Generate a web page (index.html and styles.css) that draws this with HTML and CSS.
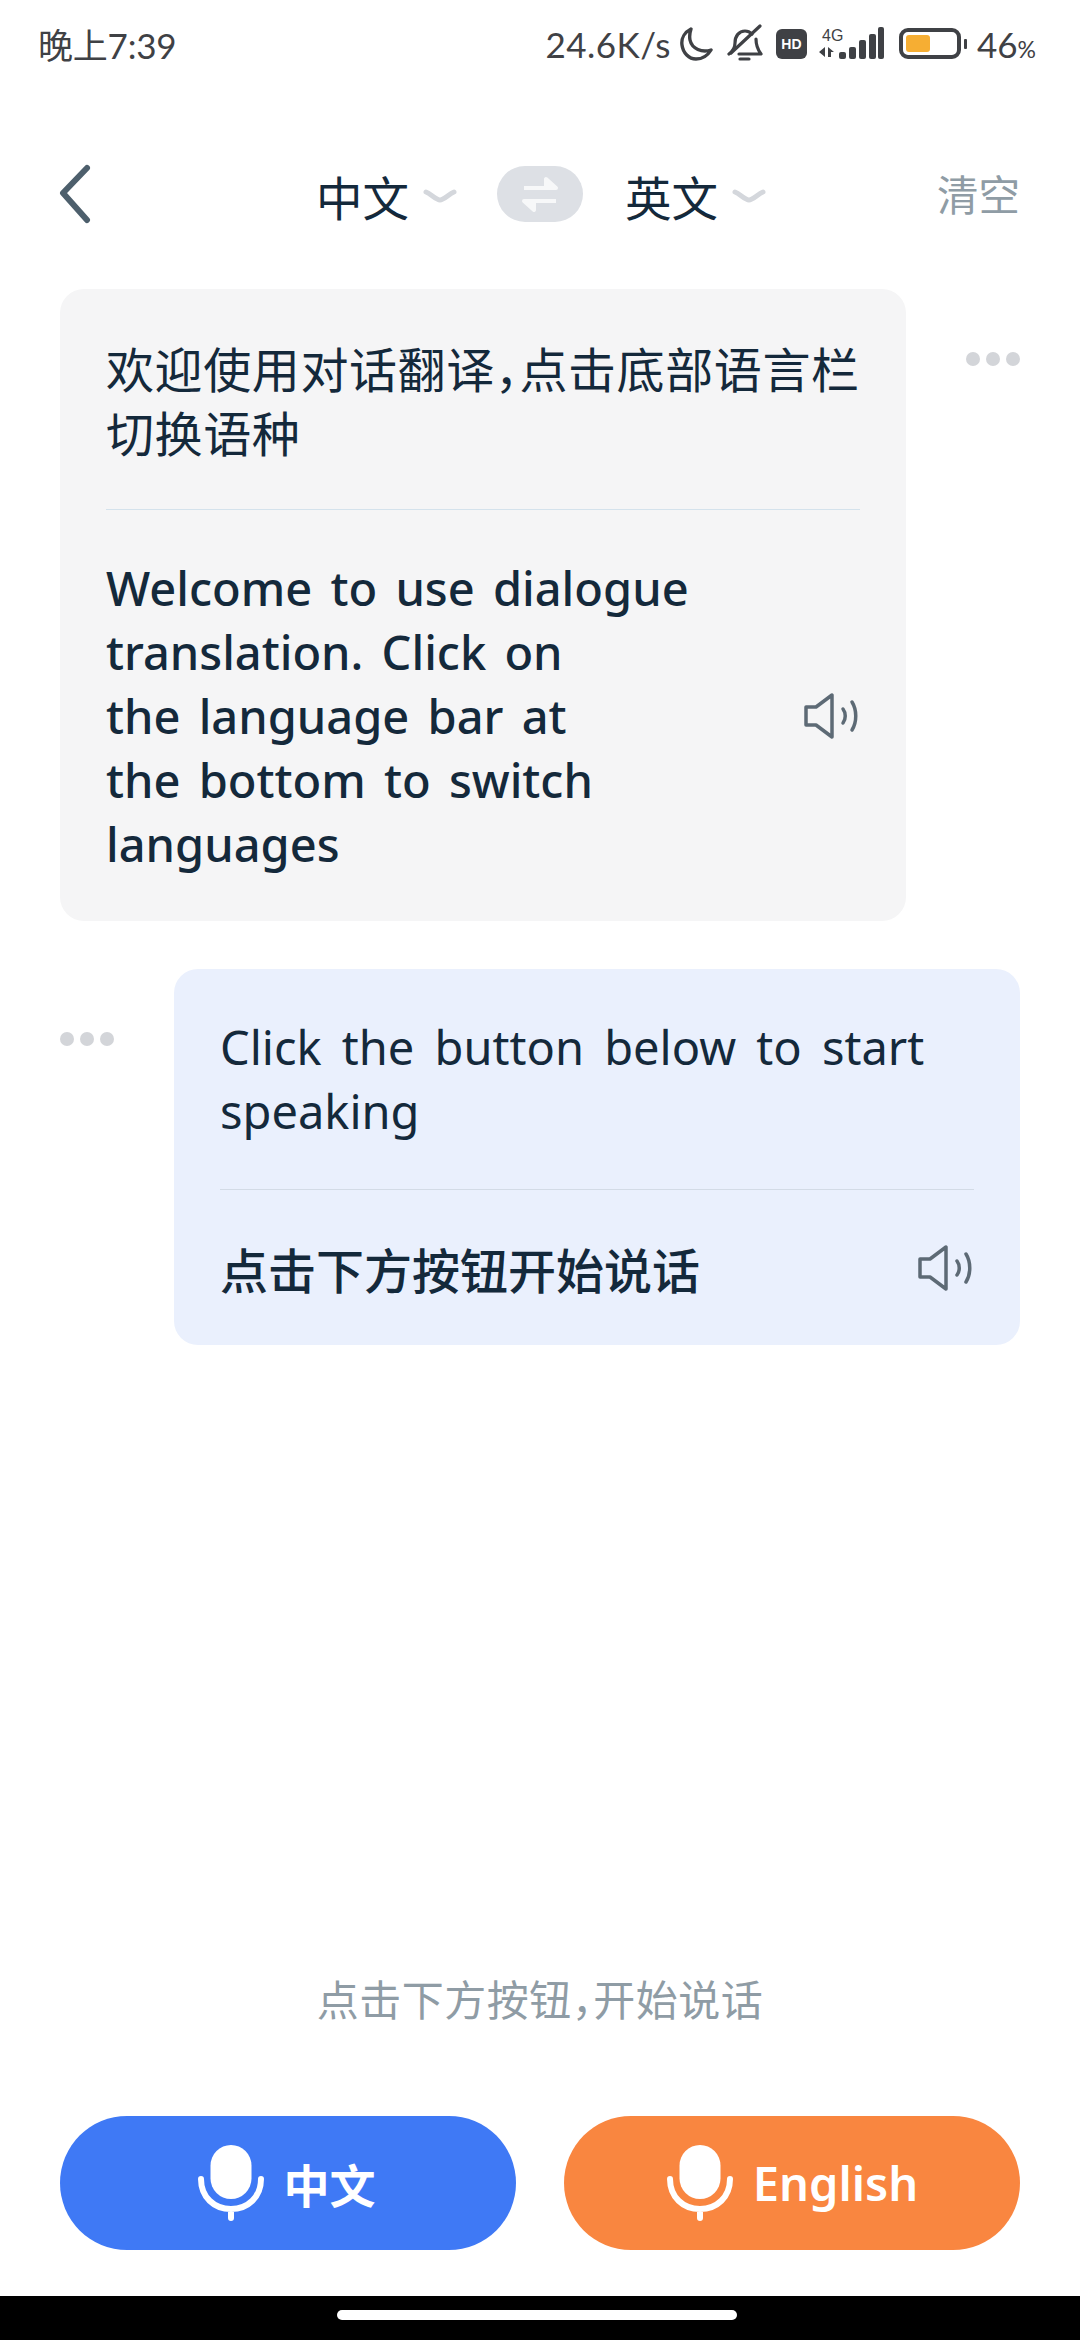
FILE: index.html
```html
<!DOCTYPE html>
<html lang="zh">
<head>
<meta charset="utf-8">
<title>对话翻译</title>
<link rel="stylesheet" href="styles.css">
</head>
<body>
<div class="page">
  <div class="status">
    <div class="st-time">晚上7:39</div>
    <div class="st-right">
      <span class="st-speed">24.6K/s</span>
      <svg class="ic-moon" width="34" height="36" viewBox="0 0 34 36"><path d="M12 3C6 6 2 12 3 19c1 8 7 14 14 14 7 0 12-4 15-9-9 3-19-1-21-10-.8-4 0-8 1-11z" fill="none" stroke="#3f4145" stroke-width="3.4" stroke-linejoin="round"/></svg>
      <svg class="ic-bell" width="36" height="40" viewBox="0 0 36 40"><path d="M2 30c4-3 6-7 6-11 0-7 4-12 10-12 3 0 5 1 7 3M29 15c0 6 2 11 5 15H12M13 35h9" fill="none" stroke="#3f4145" stroke-width="3.2" stroke-linecap="round" stroke-linejoin="round"/><path d="M4 29L33 2" stroke="#3f4145" stroke-width="3.2" stroke-linecap="round"/></svg>
      <span class="st-hd">HD</span>
      <svg class="ic-signal" width="67" height="36" viewBox="0 0 67 36"><rect x="21" y="26" width="7" height="7" rx="2" fill="#3f4145"/><rect x="31" y="21" width="7" height="12" rx="2" fill="#3f4145"/><rect x="41" y="14" width="7" height="19" rx="2" fill="#3f4145"/><rect x="51" y="8" width="7" height="25" rx="2" fill="#3f4145"/><rect x="60" y="1" width="6" height="32" rx="2" fill="#3f4145"/><path d="M7 21v10L1 26zM10 21v10h3v-5h3z" fill="#3f4145"/><text x="4" y="15" class="st-4g">4G</text></svg>
      <div class="battery"><div class="battery-fill"></div></div>
      <span class="battery-tip"></span>
      <span class="st-pct">46<small>%</small></span>
    </div>
  </div>

  <div class="nav">
    <svg class="back" width="34" height="60" viewBox="0 0 34 60"><path d="M30 4L6 29l24 27" fill="none" stroke="#4d5f6c" stroke-width="6" stroke-linecap="round" stroke-linejoin="round"/></svg>
    <div class="langs">
      <span class="lang">中文</span>
      <svg class="chev" width="34" height="16" viewBox="0 0 34 16"><path d="M3 4c5 2 10 8 14 8s9-6 14-8" fill="none" stroke="#d4d7dc" stroke-width="5" stroke-linecap="round"/></svg>
      <div class="swap"><svg width="40" height="36" viewBox="0 0 40 36"><path d="M4 12h32L26 3v9" fill="#f7f8f9" stroke="#f7f8f9" stroke-width="4" stroke-linejoin="round"/><path d="M36 25H4l10 9v-9" fill="#f7f8f9" stroke="#f7f8f9" stroke-width="4" stroke-linejoin="round"/></svg></div>
      <span class="lang">英文</span>
      <svg class="chev" width="34" height="16" viewBox="0 0 34 16"><path d="M3 4c5 2 10 8 14 8s9-6 14-8" fill="none" stroke="#d4d7dc" stroke-width="5" stroke-linecap="round"/></svg>
    </div>
    <span class="clear">清空</span>
  </div>

  <div class="chat">
    <div class="row">
      <div class="card card-grey">
        <p class="txt zh">欢迎使用对话翻译，点击底部语言栏切换语种</p>
        <div class="divider"></div>
        <div class="result">
          <p class="txt en-b narrow">Welcome to use dialogue translation. Click on<br>the language bar at<br>the bottom to switch languages</p>
          <svg class="speaker" width="56" height="46" viewBox="0 0 56 46"><path d="M2 14h10L28 2v42L12 32H2z" fill="none" stroke="#5d6a75" stroke-width="3.5" stroke-linejoin="round"/><path d="M39 16c3 4 3 10 0 14M48 9c5 8 5 20 0 28" fill="none" stroke="#5d6a75" stroke-width="3.5" stroke-linecap="round"/></svg>
        </div>
      </div>
      <div class="dots"><i></i><i></i><i></i></div>
    </div>
    <div class="row row-me">
      <div class="dots"><i></i><i></i><i></i></div>
      <div class="card card-blue">
        <p class="txt en">Click the button below to start speaking</p>
        <div class="divider divider-blue"></div>
        <div class="result">
          <p class="txt zh-b">点击下方按钮开始说话</p>
          <svg class="speaker" width="56" height="46" viewBox="0 0 56 46"><path d="M2 14h10L28 2v42L12 32H2z" fill="none" stroke="#5d6a75" stroke-width="3.5" stroke-linejoin="round"/><path d="M39 16c3 4 3 10 0 14M48 9c5 8 5 20 0 28" fill="none" stroke="#5d6a75" stroke-width="3.5" stroke-linecap="round"/></svg>
        </div>
      </div>
    </div>
  </div>

  <div class="hint">点击下方按钮，开始说话</div>

  <div class="actions">
    <button class="btn btn-blue">
      <svg width="66" height="76" viewBox="0 0 66 76"><rect x="12.500" y="0" width="41" height="54" rx="20.500" fill="#fff"/><path d="M3 34c0 18 13 30 30 30s30-12 30-30M33 64v9" fill="none" stroke="#fff" stroke-width="6" stroke-linecap="round"/></svg>
      <span>中文</span>
    </button>
    <button class="btn btn-orange">
      <svg width="66" height="76" viewBox="0 0 66 76"><rect x="12.500" y="0" width="41" height="54" rx="20.500" fill="#fff"/><path d="M3 34c0 18 13 30 30 30s30-12 30-30M33 64v9" fill="none" stroke="#fff" stroke-width="6" stroke-linecap="round"/></svg>
      <span class="en-label">English</span>
    </button>
  </div>

  <div class="homebar"><div class="pill"></div></div>
</div>
</body>
</html>
```
FILE: styles.css
```css
* { box-sizing: border-box; }
html, body { margin: 0; padding: 0; background: #fff; }
body { font-family: "Noto Sans", "Noto Sans CJK SC", sans-serif; color: #14293b; }
.page { width: 1080px; height: 2340px; display: flex; flex-direction: column; overflow: hidden; }
.status { height: 92px; flex: none; display: flex; justify-content: space-between; align-items: center; padding: 0 44px 5px 38px; color: #3f4145; font-family: Lato, "Noto Sans CJK SC", sans-serif; }
.st-time { font-size: 35px; letter-spacing: -.2px; }
.st-right { display: flex; align-items: center; }
.st-speed { font-size: 35px; letter-spacing: .5px; margin-right: 8px; }
.ic-moon { margin-right: 14px; }
.ic-bell { margin-right: 13px; }
.st-hd { width: 31px; height: 30px; border-radius: 6px; background: #3f4145; color: #fff; font: 900 14px/30px "Liberation Sans", sans-serif; text-align: center; margin-right: 11px; }
.st-4g { font: 16px "Liberation Sans", sans-serif; fill: #3f4145; }
.ic-signal { margin-right: 14px; }
.battery { width: 62px; height: 31px; border: 4px solid #3f4145; border-radius: 9px; padding: 3px; }
.battery-fill { width: 24px; height: 100%; background: #f6ae33; border-radius: 3px; }
.battery-tip { width: 3px; height: 10px; background: #3f4145; margin: 0 10px 0 3px; border-radius: 1px; }
.st-pct { font-size: 35px; }
.st-pct small { font-size: 23px; }
.nav { height: 104px; flex: none; margin-top: 50px; display: flex; align-items: center; padding: 0 60px 0 57px; }
.back { flex: none; }
.langs { flex: 1; display: flex; align-items: center; padding-left: 225px; }
.lang { font-size: 46.500px; line-height: 60px; padding-top: 3px; font-family: "Noto Sans CJK SC", sans-serif; }
.chev { margin: 4px 40px 0 14px; }
.swap { width: 86px; height: 56px; border-radius: 28px; background: #dde0e5; display: flex; align-items: center; justify-content: center; margin-right: 42px; }
.clear { font-size: 41.500px; color: #8f9ca5; padding-bottom: 2px; font-family: "Noto Sans CJK SC", sans-serif; }
.chat { flex: 1; padding: 43px 60px 0; display: flex; flex-direction: column; gap: 48px; }
.row { display: flex; justify-content: space-between; align-items: flex-start; }
.card { width: 846px; border-radius: 24px; padding: 46px 46px 45px; }
.card-grey { background: #f5f5f6; }
.card-blue { background: #eaf0fd; }
.txt { margin: 0; font-size: 47px; line-height: 64px; word-spacing: 8px; }
.zh { font-size: 48px; letter-spacing: .6px; font-feature-settings: "halt"; font-family: "Noto Sans CJK SC", sans-serif; }
.en { font-weight: 400; }
.divider { height: 1px; background: #d4e2ec; margin: 46px 0 46px; }
.divider-blue { background: #d3dbe6; }
.result { display: flex; align-items: center; justify-content: space-between; }
.en-b { font-weight: 500; word-spacing: 6px; }
.narrow { width: 640px; }
.zh-b { font-size: 48px; font-weight: 500; font-family: "Noto Sans CJK SC", sans-serif; }
.speaker { flex: none; }
.dots { display: flex; gap: 6px; padding-top: 63px; width: 54px; }
.dots i { width: 14px; height: 14px; border-radius: 50%; background: #d3d5d9; display: block; }
.hint { flex: none; text-align: center; font-size: 42px; line-height: 54px; letter-spacing: .5px; font-feature-settings: "halt"; color: #8f9ca5; font-family: "Noto Sans CJK SC", sans-serif; margin-bottom: 91px; }
.actions { flex: none; display: flex; justify-content: space-between; padding: 0 60px; margin-bottom: 46px; }
.btn { width: 456px; height: 134px; border: 0; border-radius: 67px; color: #fff; display: flex; align-items: center; justify-content: center; gap: 20px; font: 700 46px "Noto Sans CJK SC", sans-serif; padding: 0 3px 0 0; }
.btn-blue { background: #3f79f5; }
.btn-orange { background: #f98640; padding: 0 0 0 1px; }
.en-label { font-family: "Noto Sans", sans-serif; font-size: 47px; font-weight: 600; }
.homebar { height: 44px; flex: none; background: #000; display: flex; justify-content: center; padding: 14px 6px 0 0; }
.pill { width: 400px; height: 10px; border-radius: 5px; background: #fff; }
```
